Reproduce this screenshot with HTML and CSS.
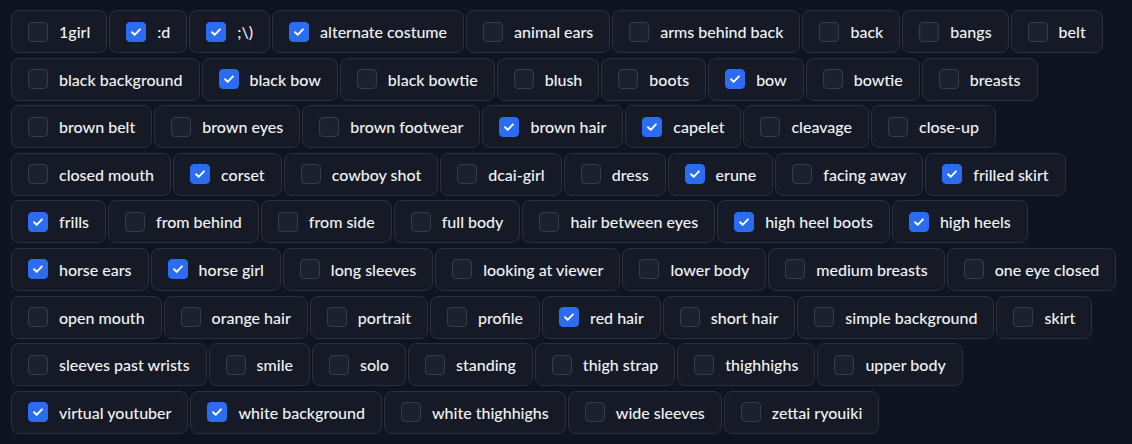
FILE: index.html
```html
<!DOCTYPE html>
<html lang="en">
<head>
    <meta charset="UTF-8">
    <title>Tags</title>
    <link rel="stylesheet" href="styles.css">
</head>
<body>
    <div class="block">
        <div class="wrap" id="tags"></div>
    </div>
    <script>
        // tag list, true = checked
        const tags = [
            ['1girl', 0], [':d', 1], [';\\)', 1], ['alternate costume', 1], ['animal ears', 0], ['arms behind back', 0], ['back', 0], ['bangs', 0], ['belt', 0],
            ['black background', 0], ['black bow', 1], ['black bowtie', 0], ['blush', 0], ['boots', 0], ['bow', 1], ['bowtie', 0], ['breasts', 0],
            ['brown belt', 0], ['brown eyes', 0], ['brown footwear', 0], ['brown hair', 1], ['capelet', 1], ['cleavage', 0], ['close-up', 0],
            ['closed mouth', 0], ['corset', 1], ['cowboy shot', 0], ['dcai-girl', 0], ['dress', 0], ['erune', 1], ['facing away', 0], ['frilled skirt', 1],
            ['frills', 1], ['from behind', 0], ['from side', 0], ['full body', 0], ['hair between eyes', 0], ['high heel boots', 1], ['high heels', 1],
            ['horse ears', 1], ['horse girl', 1], ['long sleeves', 0], ['looking at viewer', 0], ['lower body', 0], ['medium breasts', 0], ['one eye closed', 0],
            ['open mouth', 0], ['orange hair', 0], ['portrait', 0], ['profile', 0], ['red hair', 1], ['short hair', 0], ['simple background', 0], ['skirt', 0],
            ['sleeves past wrists', 0], ['smile', 0], ['solo', 0], ['standing', 0], ['thigh strap', 0], ['thighhighs', 0], ['upper body', 0],
            ['virtual youtuber', 1], ['white background', 1], ['white thighhighs', 0], ['wide sleeves', 0], ['zettai ryouiki', 0]
        ];
        const check = '<svg viewBox="0 0 16 16" width="14" height="14"><path d="M3.5 8.3l3 3 6-6.3" fill="none" stroke="#fff" stroke-width="2.2" stroke-linecap="round" stroke-linejoin="round"/></svg>';
        const wrap = document.getElementById('tags');
        tags.forEach(([name, on]) => {
            const label = document.createElement('label');
            label.className = 'tag';
            const box = document.createElement('span');
            box.className = on ? 'box checked' : 'box';
            if (on) box.innerHTML = check;
            const text = document.createElement('span');
            text.textContent = name;
            label.appendChild(box);
            label.appendChild(text);
            wrap.appendChild(label);
        });
    </script>
</body>
</html>
```

FILE: styles.css
```css
body {
    margin: 0;
    background: #0b0f19;
    font-family: "Source Sans Pro", Lato, sans-serif;
    color: #f1f2f4;
}
.block {
    background: #0f1421;
    padding: 10px 11px;
    height: 444px;
    box-sizing: border-box;
}
.wrap {
    display: flex;
    flex-wrap: wrap;
    row-gap: 4.6px;
    column-gap: 2px;
}
.tag {
    display: flex;
    align-items: center;
    gap: 11px;
    height: 43px;
    box-sizing: border-box;
    padding: 0 16px;
    background: #151a26;
    border: 1px solid #2a303c;
    border-radius: 8px;
    font-size: 16px;
    font-weight: 500;
}
.box {
    width: 20px;
    height: 20px;
    box-sizing: border-box;
    border: 1px solid #363d49;
    background: #1c222d;
    border-radius: 4px;
    display: flex;
    align-items: center;
    justify-content: center;
}
.box.checked {
    background: #2b6cf0;
    border-color: #2b6cf0;
}
```
